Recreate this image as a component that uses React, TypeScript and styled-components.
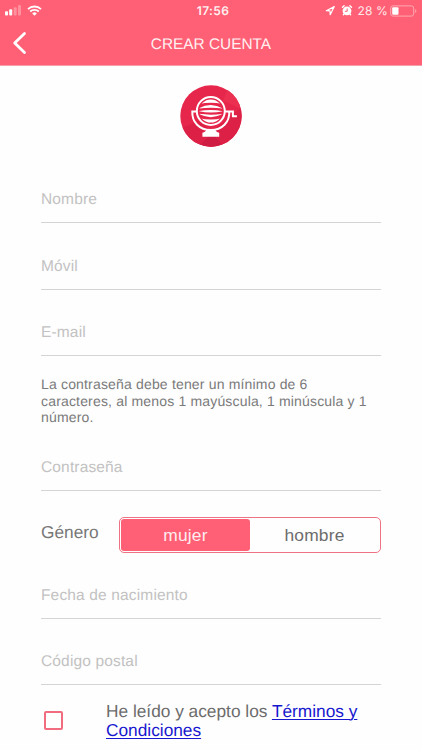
import React from "react";
import styled, { createGlobalStyle } from "styled-components";

const GlobalStyle = createGlobalStyle`
  * { box-sizing: border-box; }
  body {
    margin: 0;
    background: #fff;
    font-family: "Liberation Sans", Arial, sans-serif;
    text-rendering: geometricPrecision;
    overflow: hidden;
  }
`;

const Screen = styled.div`
  width: 422px;
  height: 750px;
  display: flex;
  flex-direction: column;
  background: #fefefe;
  overflow: hidden;
`;

const Header = styled.header`
  flex: none;
  height: 66px;
  background: #ff6075;
  border-bottom: 1px solid #f3a0aa;
  color: #fff;
`;

const StatusBar = styled.div`
  height: 22px;
  display: grid;
  grid-template-columns: 1fr auto 1fr;
  align-items: center;
  padding: 0 5px 0 4px;
`;

const StatusGroup = styled.div<{ $end?: boolean }>`
  display: flex;
  align-items: center;
  justify-content: ${(p) => (p.$end ? "flex-end" : "flex-start")};
`;

const Clock = styled.time`
  padding-left: 5px;
  font: 600 12px/22px Inter, sans-serif;
  letter-spacing: 0.4px;
  color: #fff0f2;
`;

const Battery = styled.span`
  font: 400 12px/22px Inter, sans-serif;
  letter-spacing: 0.15px;
  margin: 0 2px 0 4px;
  color: #ffe9ec;
`;

const NavBar = styled.div`
  height: 43px;
  display: grid;
  grid-template-columns: 50px 1fr 50px;
  align-items: center;
`;

const BackButton = styled.button`
  display: flex;
  margin-top: -1px;
  padding: 0 0 0 11px;
  border: 0;
  background: none;
`;

const Title = styled.h1`
  margin: 0;
  padding-top: 2px;
  text-align: center;
  font-size: 15.4px;
  font-weight: 400;
  line-height: 20px;
  color: #fff0f2;
`;

const Form = styled.form`
  display: flex;
  flex-direction: column;
  padding: 19px 41px 0;
`;

const Logo = styled.svg`
  align-self: center;
  flex: none;
  margin-bottom: 29px;
`;

const Field = styled.label<{ $gap?: number }>`
  flex: none;
  height: 47px;
  margin-bottom: ${(p) => p.$gap ?? 19}px;
  border-bottom: 1px solid #d4d4d4;
  font-size: 15.5px;
  line-height: 47px;
  letter-spacing: 0.15px;
  color: #c2c2c2;
`;

const Hint = styled.p`
  margin: 1px -10px 18px 0;
  font-size: 14px;
  line-height: 16.5px;
  letter-spacing: 0.17px;
  color: #7a7a7a;
`;

const GenderRow = styled.div`
  display: flex;
  align-items: center;
  height: 36px;
  margin-bottom: 19px;
`;

const GenderLabel = styled.span`
  width: 78px;
  font-size: 17.3px;
  line-height: 24px;
  margin-top: -6px;
  color: #777;
`;

const Segmented = styled.div`
  width: 262px;
  height: 36px;
  display: flex;
  padding: 1px;
  border: 1px solid #ee7285;
  border-radius: 5px;
`;

const Segment = styled.button<{ $active?: boolean }>`
  flex: 1;
  padding: 1px 0 0;
  border: 0;
  border-radius: 3px;
  background: ${(p) => (p.$active ? "#ff6075" : "transparent")};
  color: ${(p) => (p.$active ? "#ffecef" : "#6c6c6c")};
  font: 400 17.4px/20px "Liberation Sans", Arial, sans-serif;
  letter-spacing: 0.2px;
`;

const Terms = styled.div`
  display: flex;
  align-items: flex-start;
`;

const Checkbox = styled.span`
  flex: none;
  width: 19px;
  height: 19px;
  margin: 9px 43px 0 3px;
  border: 2px solid #f16c7f;
  border-radius: 2px;
`;

const TermsText = styled.p`
  margin: 0 -20px 0 0;
  font-size: 17.3px;
  line-height: 19.5px;
  color: #6c6c6c;
`;

const TermsLink = styled.a`
  color: #1717cf;
  text-decoration: underline;
  text-decoration-thickness: 1px;
  text-underline-offset: 2px;
`;

export default function App() {
  return (
    <Screen>
      <GlobalStyle />
      <Header>
        <StatusBar>
          <StatusGroup>
            <svg width="40" height="22" viewBox="0 0 40 22" fill="none">
              <g fill="#fff">
                <rect x="1" y="11.2" width="3" height="4.3" rx="1" />
                <rect x="5.2" y="9.2" width="3" height="6.3" rx="1" />
                <rect x="9.7" y="7.2" width="3" height="8.3" rx="1" opacity=".3" />
                <rect x="14" y="5" width="3" height="10.5" rx="1" opacity=".3" />
              </g>
              <g stroke="#fff" strokeWidth="1.8">
                <path d="M24 9.1a9.4 9.4 0 0 1 13 0" />
                <path d="M26.2 11.5a6.3 6.3 0 0 1 8.6 0" />
              </g>
              <path d="M28.2 13.4a3.4 3.4 0 0 1 4.6 0l-2.3 2.3z" fill="#fff" />
            </svg>
          </StatusGroup>
          <Clock>17:56</Clock>
          <StatusGroup $end>
            <svg width="28" height="22" viewBox="0 0 28 22" fill="none">
              <path d="m1.3 10.7 8-4.1-4.1 8.1-.2-3.9z" stroke="#fff" strokeWidth="1.2" strokeLinejoin="round" />
              <circle cx="22" cy="10.8" r="4.4" fill="#fff" />
              <path d="m17.5 7.2 1.6-1.5M26.5 7.2l-1.6-1.5M19 14l-.6.7M25 14l.6.7" stroke="#fff" strokeWidth="1.4" strokeLinecap="round" />
              <path d="M22.2 8.5v2.8h-2.3" stroke="#ff6075" strokeWidth="1" />
            </svg>
            <Battery>28 %</Battery>
            <svg width="27" height="12" viewBox="0 0 27 12" fill="none">
              <rect x=".7" y=".9" width="23" height="10.2" rx="2.2" stroke="#ffa8b3" />
              <rect x="2.2" y="2.3" width="6.3" height="7.4" rx="1" fill="#fff" />
              <path d="M25.2 4.2c1.6.5 1.6 3.1 0 3.6z" fill="#ffa8b3" />
            </svg>
          </StatusGroup>
        </StatusBar>
        <NavBar>
          <BackButton type="button" aria-label="Atrás">
            <svg width="16" height="24" viewBox="0 0 16 24" fill="none">
              <path d="M13.5 2.5 3.7 12l9.8 9.5" stroke="#fff" strokeWidth="2.8" strokeLinecap="round" strokeLinejoin="round" />
            </svg>
          </BackButton>
          <Title>CREAR CUENTA</Title>
        </NavBar>
      </Header>

      <Form>
        <Logo width="62" height="62" viewBox="0 0 62 62" fill="none">
          <defs>
            <clipPath id="disc"><circle cx="31" cy="31" r="30.7" /></clipPath>
            <clipPath id="drum"><circle cx="30.8" cy="26" r="11.6" /></clipPath>
          </defs>
          <g clipPath="url(#disc)">
            <path d="M0 0h62v62H0z" fill="#e6264b" />
            <path d="M0 44 18 36l14 10 13-10 17-14v40H0z" fill="#dc2046" />
            <path d="m18 62 14-14 12 14z" fill="#cf1c42" />
            <path d="m43 16 19 8V8L48 2z" fill="#eb3052" />
          </g>
          <circle cx="30.8" cy="26" r="14" stroke="#fff" strokeWidth="2" />
          <g clipPath="url(#drum)" fill="#fff">
            <path d="M19 19C22 11 39.6 11 42.6 19Q30.8 16.4 19 19z" />
            <path d="M18.5 23.6Q30.8 16.6 43 23.6Q30.8 22 18.5 23.6z" />
            <path d="M18.5 26.2Q30.8 23.6 43 26.2Q30.8 28.8 18.5 26.2z" />
            <path d="M18.5 28.8Q30.8 35.6 43 28.8Q30.8 30.6 18.5 28.8z" />
            <path d="M19 33C22 41 39.6 41 42.6 33Q30.8 36 19 33z" />
          </g>
          <path d="M16.6 26.6h-4.3C11.8 37 19.4 45 30.8 45S49.8 37 49.3 26.6H45M49.3 26.6h3.6v4.6h4" stroke="#fff" strokeWidth="2" />
          <path d="M26.5 44.6h8.6c.6 1.7 1.8 2.7 4.1 3.2v4H22.4v-4c2.3-.5 3.5-1.5 4.1-3.2z" fill="#fff" />
        </Logo>

        <Field $gap={20}>Nombre</Field>
        <Field>Móvil</Field>
        <Field>E-mail</Field>
        <Hint>
          La contraseña debe tener un mínimo de 6<br />
          caracteres, al menos 1 mayúscula, 1 minúscula y 1<br />
          número.
        </Hint>
        <Field $gap={26}>Contraseña</Field>
        <GenderRow>
          <GenderLabel>Género</GenderLabel>
          <Segmented>
            <Segment type="button" $active>mujer</Segment>
            <Segment type="button">hombre</Segment>
          </Segmented>
        </GenderRow>
        <Field>Fecha de nacimiento</Field>
        <Field $gap={17}>Código postal</Field>
        <Terms>
          <Checkbox role="checkbox" aria-checked="false" />
          <TermsText>
            He leído y acepto los <TermsLink href="#">Términos y<br />Condiciones</TermsLink>
          </TermsText>
        </Terms>
      </Form>
    </Screen>
  );
}
